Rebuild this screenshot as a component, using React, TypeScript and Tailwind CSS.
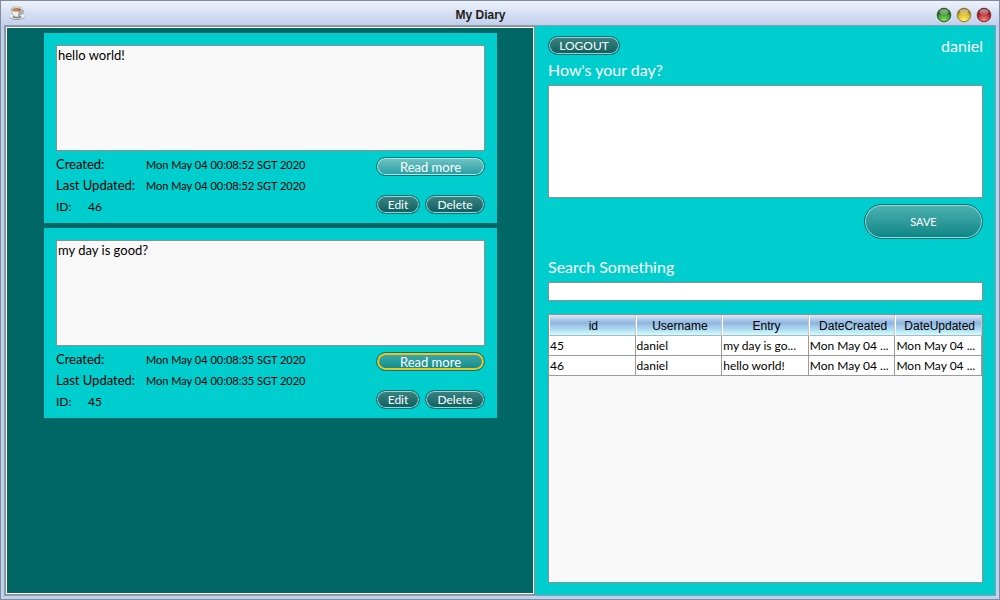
import { useState } from "react";

type Entry = { id: number; username: string; text: string; stamp: string; focused: boolean };

const entries: Entry[] = [
  { id: 46, username: "daniel", text: "hello world!", stamp: "Mon May 04 00:08:52 SGT 2020", focused: false },
  { id: 45, username: "daniel", text: "my day is good?", stamp: "Mon May 04 00:08:35 SGT 2020", focused: true },
];

const rows = [...entries].sort((a, b) => a.id - b.id);
const columns = ["id", "Username", "Entry", "DateCreated", "DateUpdated"];

const shorten = (text: string, keep: number) => (text.length > keep ? text.slice(0, keep) + "..." : text);

const pill =
  "flex h-[19px] items-center justify-center rounded-full border border-[#0b7374] pt-px leading-none text-white ";
const dark = "text-xs bg-linear-to-b from-[#3b8584] to-[#065f60] inset-ring inset-ring-[#a5cfce]";
const light = "text-[13px] bg-linear-to-b from-[#6fc4c5] to-[#1d9fa1] inset-ring inset-ring-[#b5e6e6]";
const focus = "text-[13px] bg-linear-to-b from-[#3fabab] to-[#068a8b] inset-ring-2 inset-ring-[#efc51c]";

function CoffeeCup() {
  return (
    <svg className="size-4" viewBox="0 0 16 16" aria-hidden="true">
      <ellipse cx="8" cy="12" rx="7.6" ry="2.9" fill="#9a9c9e" />
      <ellipse cx="8" cy="11.3" rx="7.4" ry="2.6" fill="#f3f3f2" />
      <ellipse cx="8" cy="11.8" rx="4.5" ry="1.6" fill="#85878a" />
      <path d="M12.5 5.5c3-.6 3 3.3-1 3.6" fill="none" stroke="#aaa" strokeWidth="1.2" />
      <path d="M2.4 4.2c0 4 1.8 7.8 5.2 7.8s5.5-3.5 5.5-7.8z" fill="#eeeeed" stroke="#85878a" strokeWidth=".6" />
      <path d="M9.5 6.5 13 5c-.2 3.5-1.8 6.2-4.2 6.8z" fill="#aaa9a8" />
      <ellipse cx="7.7" cy="4.2" rx="5.6" ry="2.3" fill="#f8f8f6" stroke="#8d8e90" strokeWidth=".6" />
      <ellipse cx="7.7" cy="4.4" rx="4.4" ry="1.5" fill="#a9682f" />
      <ellipse cx="7" cy="4.6" rx="2.6" ry=".8" fill="#d89a56" />
    </svg>
  );
}

const lights = [
  { name: "Minimize", edge: "#1c4f17", main: "#3c9a2c", glow: "#8edc66" },
  { name: "Maximize", edge: "#83701a", main: "#dcbb25", glow: "#fff07c" },
  { name: "Close", edge: "#741b1e", main: "#bd3036", glow: "#f58b83" },
];

function WindowButton({ name, edge, main, glow }: (typeof lights)[number]) {
  return (
    <button type="button" aria-label={name}>
      <svg className="size-4" viewBox="0 0 16 16" aria-hidden="true">
        <defs>
          <radialGradient id={name} cx=".5" cy=".9" r=".75">
            <stop offset="0" stopColor={glow} />
            <stop offset=".65" stopColor={main} />
            <stop offset="1" stopColor={edge} />
          </radialGradient>
          <linearGradient id={name + "Shine"} x2="0" y2="1">
            <stop offset="0" stopColor="#fff" stopOpacity=".6" />
            <stop offset="1" stopColor="#fff" stopOpacity=".15" />
          </linearGradient>
        </defs>
        <circle cx="8" cy="8" r="6.8" fill={`url(#${name})`} stroke={edge} strokeWidth=".9" />
        <ellipse cx="8" cy="5" rx="4.5" ry="2.8" fill={`url(#${name}Shine)`} />
      </svg>
    </button>
  );
}

function EntryCard({ entry }: { entry: Entry }) {
  return (
    <article className="bg-[#00cdcd] p-3 pb-1.5">
      <textarea
        readOnly
        aria-label={`Entry ${entry.id}`}
        defaultValue={entry.text}
        className="block h-[106px] w-full resize-none border border-[#8e8f8f] bg-[#f8f8f8] px-px py-px text-[13px] leading-4 outline-none"
      />
      <div className="flex items-start justify-between pt-[3px]">
        <dl className="grid grid-cols-[90px_auto] text-[13px] leading-[21px]">
          <dt>Created:</dt>
          <dd className="text-[11px] leading-[21px]">{entry.stamp}</dd>
          <dt>Last Updated:</dt>
          <dd className="text-[11px] leading-[21px]">{entry.stamp}</dd>
          <div className="col-span-2 flex text-xs leading-[21px]">
            <dt className="w-8">ID:</dt>
            <dd>{entry.id}</dd>
          </div>
        </dl>
        <div className="flex w-[109px] flex-col gap-[19px] pt-[3px]">
          <button type="button" className={pill + (entry.focused ? focus : light)}>
            Read more
          </button>
          <div className="flex gap-[5px]">
            <button type="button" className={pill + "w-11 " + dark}>
              Edit
            </button>
            <button type="button" className={pill + "flex-1 " + dark}>
              Delete
            </button>
          </div>
        </div>
      </div>
    </article>
  );
}

export default function App() {
  const [draft, setDraft] = useState("");
  const [query, setQuery] = useState("");
  const shown = rows.filter((r) => r.text.toLowerCase().includes(query.toLowerCase()));

  return (
    <div className="flex h-screen flex-col border border-[#7f8da3] bg-[#c1d1eb] font-['Lato',sans-serif] text-black">
      <header className="grid h-6 shrink-0 grid-cols-[1fr_auto_1fr] items-center bg-linear-to-b from-[#eef1fa] to-[#c1d0ec] pr-[7px] pl-2">
        <CoffeeCup />
        <h1 className="pt-1 pr-10 font-['Liberation_Sans',Arial,sans-serif] text-xs font-bold text-[#1c1c1c]">
          My Diary
        </h1>
        <div className="flex justify-end gap-1 pt-1">
          {lights.map((l) => (
            <WindowButton key={l.name} {...l} />
          ))}
        </div>
      </header>

      <main className="mx-[3px] mb-[3px] grid min-h-0 flex-1 grid-cols-[53fr_46fr] border border-[#8f9bb0] bg-[#00cdcd]">
        <section aria-label="Entries" className="min-h-0 border border-[#8e8f8f]">
          <div className="flex h-full flex-col gap-[5px] overflow-auto border border-white bg-[#006666] py-[5px] pr-9 pl-[37px]">
            {entries.map((e) => (
              <EntryCard key={e.id} entry={e} />
            ))}
          </div>
        </section>

        <section className="flex min-h-0 flex-col px-3 pt-2.5 pb-3 pl-[13px]">
          <div className="flex h-5 items-start justify-between">
            <button type="button" className={pill + "w-[72px] " + dark}>
              LOGOUT
            </button>
            <span className="text-base leading-5 text-white">daniel</span>
          </div>
          <label htmlFor="draft" className="mt-1 text-base leading-5 text-white">
            How's your day?
          </label>
          <textarea
            id="draft"
            value={draft}
            onChange={(e) => setDraft(e.target.value)}
            className="mt-[5px] block h-[113px] resize-none border border-[#8e8f8f] bg-white px-1 text-xs outline-none"
          />
          <button
            type="button"
            className="mt-1.5 h-[35px] w-[119px] self-end rounded-full border border-[#0b7374] bg-linear-to-b from-[#4bb2b2] to-[#048586] pt-px text-[11px] text-white inset-ring inset-ring-[#a5d9d8]"
          >
            SAVE
          </button>
          <label htmlFor="search" className="mt-[18px] text-base leading-5 text-white">
            Search Something
          </label>
          <input
            id="search"
            type="text"
            value={query}
            onChange={(e) => setQuery(e.target.value)}
            className="mt-[5px] h-[19px] border border-[#8e8f8f] bg-white px-1 text-xs outline-none"
          />
          <div className="mt-[13px] min-h-0 flex-1 overflow-auto border border-[#8e8f8f] bg-[#f8f8f8]">
            <table className="w-full table-fixed border-separate border-spacing-0 text-xs">
              <thead>
                <tr>
                  {columns.map((c) => (
                    <th
                      key={c}
                      className="h-[21px] border-r border-b border-l border-r-[#c4c8cc] border-b-[#aeb6bd] border-l-white bg-linear-to-b from-[#dbe9f7] via-[#8fb4e0] via-40% to-[#d0ffff] p-0 pt-0.5 pl-0.5 text-center font-['Liberation_Sans',Arial,sans-serif] text-xs font-normal"
                    >
                      {c}
                    </th>
                  ))}
                </tr>
              </thead>
              <tbody>
                {shown.map((r) => (
                  <tr key={r.id}>
                    {[
                      r.id,
                      r.username,
                      shorten(r.text, 12),
                      shorten(r.stamp, 11),
                      shorten(r.stamp, 11),
                    ].map((v, i) => (
                      <td
                        key={i}
                        className="h-5 border-r border-b border-[#9b9b9b] bg-white p-0 px-px leading-4 whitespace-nowrap"
                      >
                        {v}
                      </td>
                    ))}
                  </tr>
                ))}
              </tbody>
            </table>
          </div>
        </section>
      </main>
    </div>
  );
}
